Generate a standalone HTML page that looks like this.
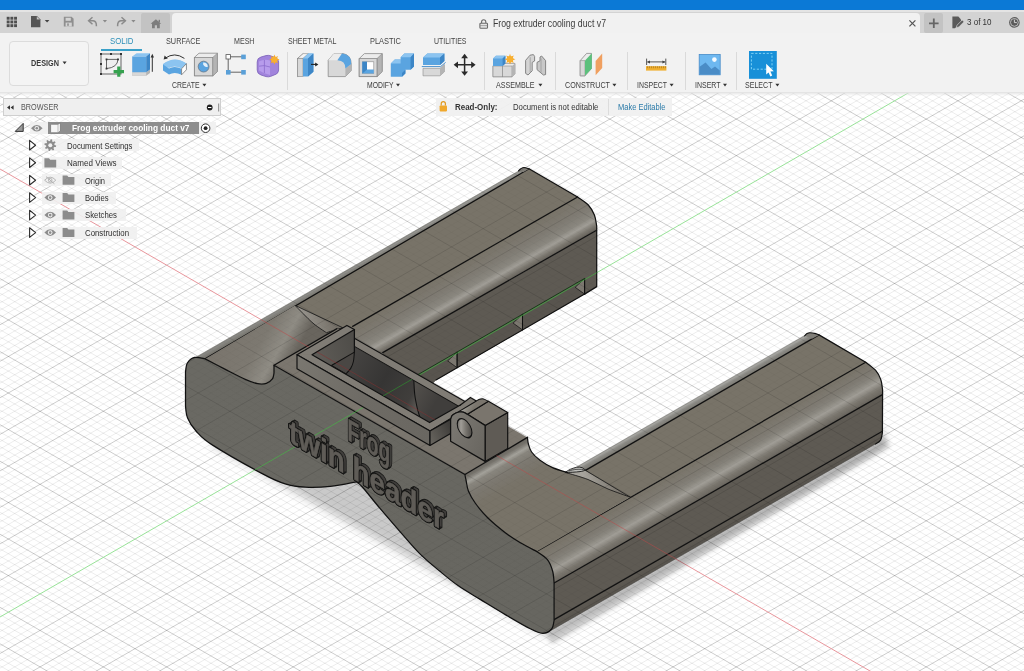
<!DOCTYPE html>
<html><head><meta charset="utf-8"><title>Fusion</title>
<style>
*{box-sizing:border-box;margin:0;padding:0}
html,body{width:1024px;height:671px;overflow:hidden;background:#fff;font-family:"Liberation Sans",sans-serif;}
#cv{position:absolute;left:0;top:0;width:1024px;height:671px}

.t{position:absolute;white-space:nowrap;line-height:1.2;transform-origin:0 50%}
.abs{position:absolute}
#bluebar{position:absolute;left:0;top:0;width:1024px;height:10px;background:#0b79d6}
#tabbar{position:absolute;left:0;top:10px;width:1024px;height:23px;background:#d3d3d3}
#tabgap{position:absolute;left:0;top:10px;width:1024px;height:2px;background:#e4e4e4}
#hometab{position:absolute;left:141px;top:13px;width:29px;height:20px;background:#c3c3c3;border-radius:2px 2px 0 0}
#doctab{position:absolute;left:172px;top:13px;width:748px;height:20px;background:#f1f1f1;border-radius:4px 4px 0 0}
#plusbtn{position:absolute;left:924px;top:13px;width:19px;height:20px;background:#c3c3c3;border-radius:2px}
#toolbar{position:absolute;left:0;top:33px;width:1024px;height:60px;background:#f2f2f2;}
#tbshadow{position:absolute;left:0;top:92px;width:1024px;height:4px;background:linear-gradient(#e2e2e2,rgba(235,235,235,0.0))}
#design{position:absolute;left:8.5px;top:41px;width:80.5px;height:45px;border:1px solid #dcdcdc;border-radius:4px;background:#f4f4f4}
.sep{position:absolute;top:52px;width:1px;height:38px;background:#dadada}
#robar{position:absolute;left:436px;top:98px;width:236px;height:18px;background:rgba(240,240,240,0.93)}
#brhead{position:absolute;left:3px;top:98px;width:218px;height:18px;background:#efefef;border:1px solid #cfcfcf}
.lbl{position:absolute;height:12px;background:rgba(240,240,240,0.9);}

</style></head><body>
<svg id="cv" width="1024" height="671" viewBox="0 0 1024 671">
<rect width="1024" height="671" fill="#fff"/>
<path d="M-5.0 86.7L6.5 80.0M-5.0 94.0L19.2 80.0M-5.0 101.3L31.9 80.0M-5.0 670.1L5.2 676.0M-5.0 115.9L57.2 80.0M-5.0 662.8L17.8 676.0M-5.0 123.2L69.8 80.0M-5.0 655.5L30.5 676.0M-5.0 130.5L82.5 80.0M-5.0 648.2L43.2 676.0M-5.0 137.8L95.2 80.0M-5.0 633.6L68.5 676.0M-5.0 152.4L120.5 80.0M-5.0 626.3L81.1 676.0M-5.0 159.7L133.1 80.0M-5.0 619.0L93.8 676.0M-5.0 167.0L145.8 80.0M-5.0 611.7L106.5 676.0M-5.0 174.3L158.5 80.0M-5.0 597.1L131.8 676.0M-5.0 188.9L183.8 80.0M-5.0 589.8L144.4 676.0M-5.0 196.2L196.4 80.0M-5.0 582.5L157.1 676.0M-5.0 203.5L209.1 80.0M-5.0 575.2L169.8 676.0M-5.0 210.8L221.8 80.0M-5.0 560.6L195.1 676.0M-5.0 225.4L247.1 80.0M-5.0 553.3L207.7 676.0M-5.0 232.7L259.7 80.0M-5.0 546.0L220.4 676.0M-5.0 240.0L272.4 80.0M-5.0 538.7L233.1 676.0M-5.0 247.3L285.1 80.0M-5.0 524.0L258.4 676.0M-5.0 262.0L310.4 80.0M-5.0 516.7L271.0 676.0M-5.0 269.3L323.0 80.0M-5.0 509.4L283.7 676.0M-5.0 276.6L335.7 80.0M-5.0 502.1L296.4 676.0M-5.0 283.9L348.4 80.0M-5.0 487.5L321.7 676.0M-5.0 298.5L373.7 80.0M-5.0 480.2L334.3 676.0M-5.0 305.8L386.3 80.0M-5.0 472.9L347.0 676.0M-5.0 313.1L399.0 80.0M-5.0 465.6L359.7 676.0M-5.0 320.4L411.7 80.0M-5.0 451.0L385.0 676.0M-5.0 335.0L437.0 80.0M-5.0 443.7L397.6 676.0M-5.0 342.3L449.6 80.0M-5.0 436.4L410.3 676.0M-5.0 349.6L462.3 80.0M-5.0 429.1L423.0 676.0M-5.0 356.9L475.0 80.0M-5.0 414.5L448.3 676.0M-5.0 371.5L500.3 80.0M-5.0 407.2L460.9 676.0M-5.0 378.8L512.9 80.0M-5.0 399.9L473.6 676.0M-5.0 386.1L525.6 80.0M-5.0 392.6L486.3 676.0M-5.0 393.4L538.3 80.0M-5.0 378.0L511.6 676.0M-5.0 408.0L563.6 80.0M-5.0 370.7L524.2 676.0M-5.0 415.3L576.2 80.0M-5.0 363.4L536.9 676.0M-5.0 422.6L588.9 80.0M-5.0 356.1L549.6 676.0M-5.0 429.9L601.6 80.0M-5.0 341.4L574.9 676.0M-5.0 444.6L626.9 80.0M-5.0 334.1L587.5 676.0M-5.0 451.9L639.5 80.0M-5.0 326.8L600.2 676.0M-5.0 459.2L652.2 80.0M-5.0 319.5L612.9 676.0M-5.0 466.5L664.9 80.0M-5.0 304.9L638.2 676.0M-5.0 481.1L690.2 80.0M-5.0 297.6L650.8 676.0M-5.0 488.4L702.8 80.0M-5.0 290.3L663.5 676.0M-5.0 495.7L715.5 80.0M-5.0 283.0L676.2 676.0M-5.0 503.0L728.2 80.0M-5.0 268.4L701.5 676.0M-5.0 517.6L753.5 80.0M-5.0 261.1L714.1 676.0M-5.0 524.9L766.1 80.0M-5.0 253.8L726.8 676.0M-5.0 532.2L778.8 80.0M-5.0 246.5L739.5 676.0M-5.0 539.5L791.5 80.0M-5.0 231.9L764.8 676.0M-5.0 554.1L816.8 80.0M-5.0 224.6L777.4 676.0M-5.0 561.4L829.4 80.0M-5.0 217.3L790.1 676.0M-5.0 568.7L842.1 80.0M-5.0 210.0L802.8 676.0M-5.0 576.0L854.8 80.0M-5.0 195.4L828.1 676.0M-5.0 590.6L880.1 80.0M-5.0 188.1L840.7 676.0M-5.0 597.9L892.7 80.0M-5.0 180.8L853.4 676.0M-5.0 605.2L905.4 80.0M-5.0 173.5L866.1 676.0M-5.0 612.5L918.1 80.0M-5.0 158.8L891.4 676.0M-5.0 627.2L943.4 80.0M-5.0 151.5L904.0 676.0M-5.0 634.5L956.0 80.0M-5.0 144.2L916.7 676.0M-5.0 641.8L968.7 80.0M-5.0 136.9L929.4 676.0M-5.0 649.1L981.4 80.0M-5.0 122.3L954.7 676.0M-5.0 663.7L1006.7 80.0M-5.0 115.0L967.3 676.0M-5.0 671.0L1019.3 80.0M-5.0 107.7L980.0 676.0M-1.0 676.0L1029.0 81.7M-5.0 100.4L992.7 676.0M11.6 676.0L1029.0 89.0M-5.0 85.8L1018.0 676.0M36.9 676.0L1029.0 103.6M-2.4 80.0L1029.0 675.1M49.6 676.0L1029.0 110.9M10.3 80.0L1029.0 667.7M62.3 676.0L1029.0 118.3M22.9 80.0L1029.0 660.4M74.9 676.0L1029.0 125.6M48.2 80.0L1029.0 645.8M100.2 676.0L1029.0 140.2M60.9 80.0L1029.0 638.5M112.9 676.0L1029.0 147.5M73.6 80.0L1029.0 631.2M125.6 676.0L1029.0 154.8M86.2 80.0L1029.0 623.9M138.2 676.0L1029.0 162.1M111.5 80.0L1029.0 609.3M163.5 676.0L1029.0 176.7M124.2 80.0L1029.0 602.0M176.2 676.0L1029.0 184.0M136.9 80.0L1029.0 594.7M188.9 676.0L1029.0 191.3M149.5 80.0L1029.0 587.4M201.5 676.0L1029.0 198.6M174.8 80.0L1029.0 572.8M226.8 676.0L1029.0 213.2M187.5 80.0L1029.0 565.5M239.5 676.0L1029.0 220.5M200.2 80.0L1029.0 558.2M252.2 676.0L1029.0 227.8M212.8 80.0L1029.0 550.9M264.8 676.0L1029.0 235.1M238.1 80.0L1029.0 536.3M290.1 676.0L1029.0 249.7M250.8 80.0L1029.0 529.0M302.8 676.0L1029.0 257.0M263.5 80.0L1029.0 521.7M315.5 676.0L1029.0 264.3M276.1 80.0L1029.0 514.4M328.1 676.0L1029.0 271.6M301.4 80.0L1029.0 499.8M353.4 676.0L1029.0 286.2M314.1 80.0L1029.0 492.5M366.1 676.0L1029.0 293.5M326.8 80.0L1029.0 485.1M378.8 676.0L1029.0 300.9M339.4 80.0L1029.0 477.8M391.4 676.0L1029.0 308.2M364.7 80.0L1029.0 463.2M416.7 676.0L1029.0 322.8M377.4 80.0L1029.0 455.9M429.4 676.0L1029.0 330.1M390.1 80.0L1029.0 448.6M442.1 676.0L1029.0 337.4M402.7 80.0L1029.0 441.3M454.7 676.0L1029.0 344.7M428.0 80.0L1029.0 426.7M480.0 676.0L1029.0 359.3M440.7 80.0L1029.0 419.4M492.7 676.0L1029.0 366.6M453.4 80.0L1029.0 412.1M505.4 676.0L1029.0 373.9M466.0 80.0L1029.0 404.8M518.0 676.0L1029.0 381.2M491.3 80.0L1029.0 390.2M543.3 676.0L1029.0 395.8M504.0 80.0L1029.0 382.9M556.0 676.0L1029.0 403.1M516.7 80.0L1029.0 375.6M568.7 676.0L1029.0 410.4M529.3 80.0L1029.0 368.3M581.3 676.0L1029.0 417.7M554.6 80.0L1029.0 353.7M606.6 676.0L1029.0 432.3M567.3 80.0L1029.0 346.4M619.3 676.0L1029.0 439.6M580.0 80.0L1029.0 339.1M632.0 676.0L1029.0 446.9M592.6 80.0L1029.0 331.8M644.6 676.0L1029.0 454.2M617.9 80.0L1029.0 317.2M669.9 676.0L1029.0 468.8M630.6 80.0L1029.0 309.9M682.6 676.0L1029.0 476.1M643.3 80.0L1029.0 302.5M695.3 676.0L1029.0 483.5M655.9 80.0L1029.0 295.2M707.9 676.0L1029.0 490.8M681.2 80.0L1029.0 280.6M733.2 676.0L1029.0 505.4M693.9 80.0L1029.0 273.3M745.9 676.0L1029.0 512.7M706.6 80.0L1029.0 266.0M758.6 676.0L1029.0 520.0M719.2 80.0L1029.0 258.7M771.2 676.0L1029.0 527.3M744.5 80.0L1029.0 244.1M796.5 676.0L1029.0 541.9M757.2 80.0L1029.0 236.8M809.2 676.0L1029.0 549.2M769.9 80.0L1029.0 229.5M821.9 676.0L1029.0 556.5M782.5 80.0L1029.0 222.2M834.5 676.0L1029.0 563.8M807.8 80.0L1029.0 207.6M859.8 676.0L1029.0 578.4M820.5 80.0L1029.0 200.3M872.5 676.0L1029.0 585.7M833.2 80.0L1029.0 193.0M885.2 676.0L1029.0 593.0M845.8 80.0L1029.0 185.7M897.8 676.0L1029.0 600.3M871.1 80.0L1029.0 171.1M923.1 676.0L1029.0 614.9M883.8 80.0L1029.0 163.8M935.8 676.0L1029.0 622.2M896.5 80.0L1029.0 156.5M948.5 676.0L1029.0 629.5M909.1 80.0L1029.0 149.2M961.1 676.0L1029.0 636.8M934.4 80.0L1029.0 134.6M986.4 676.0L1029.0 651.4M947.1 80.0L1029.0 127.3M999.1 676.0L1029.0 658.7M959.8 80.0L1029.0 119.9M1011.8 676.0L1029.0 666.1M972.4 80.0L1029.0 112.6M1024.4 676.0L1029.0 673.4M997.7 80.0L1029.0 98.0M1010.4 80.0L1029.0 90.7M1023.1 80.0L1029.0 83.4" stroke="#000" stroke-opacity="0.075" stroke-width="1" fill="none"/>
<path d="M-5.0 108.6L44.5 80.0M-5.0 640.9L55.8 676.0M-5.0 145.1L107.8 80.0M-5.0 604.4L119.1 676.0M-5.0 181.6L171.1 80.0M-5.0 567.9L182.4 676.0M-5.0 218.1L234.4 80.0M-5.0 531.3L245.7 676.0M-5.0 254.7L297.7 80.0M-5.0 494.8L309.0 676.0M-5.0 291.2L361.0 80.0M-5.0 458.3L372.3 676.0M-5.0 327.7L424.3 80.0M-5.0 421.8L435.6 676.0M-5.0 364.2L487.6 80.0M-5.0 385.3L498.9 676.0M-5.0 400.7L550.9 80.0M-5.0 348.7L562.2 676.0M-5.0 437.3L614.2 80.0M-5.0 312.2L625.5 676.0M-5.0 473.8L677.5 80.0M-5.0 275.7L688.8 676.0M-5.0 510.3L740.8 80.0M-5.0 239.2L752.1 676.0M-5.0 546.8L804.1 80.0M-5.0 202.7L815.4 676.0M-5.0 583.3L867.4 80.0M-5.0 129.6L942.0 676.0M-5.0 656.4L994.0 80.0M-5.0 93.1L1005.3 676.0M24.3 676.0L1029.0 96.3M35.6 80.0L1029.0 653.1M87.6 676.0L1029.0 132.9M98.9 80.0L1029.0 616.6M150.9 676.0L1029.0 169.4M162.2 80.0L1029.0 580.1M214.2 676.0L1029.0 205.9M225.5 80.0L1029.0 543.6M277.5 676.0L1029.0 242.4M288.8 80.0L1029.0 507.1M340.8 676.0L1029.0 278.9M352.1 80.0L1029.0 470.5M404.1 676.0L1029.0 315.5M415.4 80.0L1029.0 434.0M467.4 676.0L1029.0 352.0M478.7 80.0L1029.0 397.5M530.7 676.0L1029.0 388.5M542.0 80.0L1029.0 361.0M594.0 676.0L1029.0 425.0M605.3 80.0L1029.0 324.5M657.3 676.0L1029.0 461.5M668.6 80.0L1029.0 287.9M720.6 676.0L1029.0 498.1M731.9 80.0L1029.0 251.4M783.9 676.0L1029.0 534.6M795.2 80.0L1029.0 214.9M847.2 676.0L1029.0 571.1M858.5 80.0L1029.0 178.4M910.5 676.0L1029.0 607.6M921.8 80.0L1029.0 141.9M973.8 676.0L1029.0 644.1M985.1 80.0L1029.0 105.3" stroke="#000" stroke-opacity="0.2" stroke-width="1" fill="none"/>
<path d="M-5.0 166.1L878.7 676.0" stroke="#e8969c" stroke-width="1" fill="none"/>
<path d="M-5.0 619.9L930.7 80.0" stroke="#98e298" stroke-width="1" fill="none"/>
<defs><linearGradient id="gLAo" gradientUnits="userSpaceOnUse" x1="400.0" y1="239.3" x2="403.2" y2="244.9"><stop offset="0" stop-color="#a6a6a2"/><stop offset="0.4" stop-color="#878681"/><stop offset="1" stop-color="#74726b"/></linearGradient><linearGradient id="gLAf" gradientUnits="userSpaceOnUse" x1="500.0" y1="241.6" x2="519.0" y2="274.5"><stop offset="0" stop-color="#787368"/><stop offset="0.4" stop-color="#7f7b73"/><stop offset="0.62" stop-color="#89867e"/><stop offset="0.76" stop-color="#a09d96"/><stop offset="0.9" stop-color="#7a766e"/><stop offset="1" stop-color="#66625b"/></linearGradient><linearGradient id="gRAo" gradientUnits="userSpaceOnUse" x1="700.0" y1="396.1" x2="703.8" y2="402.7"><stop offset="0" stop-color="#b0b0ac"/><stop offset="0.4" stop-color="#8b8a85"/><stop offset="1" stop-color="#76746d"/></linearGradient><linearGradient id="gRAf" gradientUnits="userSpaceOnUse" x1="700.0" y1="457.0" x2="719.0" y2="489.9"><stop offset="0" stop-color="#787368"/><stop offset="0.35" stop-color="#7f7b73"/><stop offset="0.5" stop-color="#8a877f"/><stop offset="0.64" stop-color="#a09d96"/><stop offset="0.82" stop-color="#7a766e"/><stop offset="1" stop-color="#66625b"/></linearGradient><linearGradient id="gRAb" gradientUnits="userSpaceOnUse" x1="700.0" y1="536.0" x2="708.0" y2="549.9"><stop offset="0" stop-color="#5e5a53"/><stop offset="0.5" stop-color="#57534d"/><stop offset="1" stop-color="#504d48"/></linearGradient><linearGradient id="gScL" gradientUnits="userSpaceOnUse" x1="215.0" y1="352.0" x2="275.0" y2="387.0"><stop offset="0" stop-color="#7a756d"/><stop offset="0.5" stop-color="#7d7971"/><stop offset="0.78" stop-color="#8f8c84"/><stop offset="1" stop-color="#69655e"/></linearGradient><linearGradient id="gWL" gradientUnits="userSpaceOnUse" x1="300.0" y1="330.0" x2="330.0" y2="318.0"><stop offset="0" stop-color="#a09d96"/><stop offset="1" stop-color="#77726a"/></linearGradient><linearGradient id="gScR" gradientUnits="userSpaceOnUse" x1="496.0" y1="456.0" x2="513.0" y2="485.4"><stop offset="0" stop-color="#6b6862"/><stop offset="0.1" stop-color="#76736c"/><stop offset="0.24" stop-color="#a3a19a"/><stop offset="0.36" stop-color="#88857d"/><stop offset="0.6" stop-color="#7c7870"/><stop offset="1" stop-color="#787368"/></linearGradient><linearGradient id="gWR" gradientUnits="userSpaceOnUse" x1="590.0" y1="490.0" x2="615.0" y2="478.0"><stop offset="0" stop-color="#a8a59e"/><stop offset="1" stop-color="#77726a"/></linearGradient><linearGradient id="gFr" gradientUnits="userSpaceOnUse" x1="190.0" y1="400.0" x2="550.0" y2="600.0"><stop offset="0" stop-color="#6a6963"/><stop offset="1" stop-color="#676660"/></linearGradient><linearGradient id="gBk" gradientUnits="userSpaceOnUse" x1="350.0" y1="350.0" x2="460.0" y2="412.0"><stop offset="0" stop-color="#474543"/><stop offset="0.35" stop-color="#363534"/><stop offset="0.6" stop-color="#403e3c"/><stop offset="0.68" stop-color="#5a5753"/><stop offset="1" stop-color="#4a4845"/></linearGradient><linearGradient id="gBk2" gradientUnits="userSpaceOnUse" x1="414.0" y1="380.0" x2="440.0" y2="395.0"><stop offset="0" stop-color="#55524e"/><stop offset="1" stop-color="#403e3c"/></linearGradient><linearGradient id="gIL" gradientUnits="userSpaceOnUse" x1="312.0" y1="355.0" x2="354.0" y2="345.0"><stop offset="0" stop-color="#605d58"/><stop offset="1" stop-color="#4f4d49"/></linearGradient><linearGradient id="gBf" gradientUnits="userSpaceOnUse" x1="297.0" y1="360.0" x2="430.0" y2="436.0"><stop offset="0" stop-color="#7a7770"/><stop offset="0.5" stop-color="#6e6b65"/><stop offset="1" stop-color="#6a6761"/></linearGradient><linearGradient id="gBr" gradientUnits="userSpaceOnUse" x1="430.0" y1="438.0" x2="451.0" y2="427.0"><stop offset="0" stop-color="#65625c"/><stop offset="1" stop-color="#3f3d3a"/></linearGradient><linearGradient id="gLc" gradientUnits="userSpaceOnUse" x1="456.0" y1="411.0" x2="468.0" y2="418.0"><stop offset="0" stop-color="#6f6c66"/><stop offset="0.3" stop-color="#aaa7a1"/><stop offset="0.6" stop-color="#8d8a82"/><stop offset="1" stop-color="#7a756d"/></linearGradient><linearGradient id="gLf" gradientUnits="userSpaceOnUse" x1="450.0" y1="430.0" x2="485.0" y2="445.0"><stop offset="0" stop-color="#7a7771"/><stop offset="1" stop-color="#6a6761"/></linearGradient><linearGradient id="gHo" gradientUnits="userSpaceOnUse" x1="-8.5" y1="0.0" x2="8.5" y2="0.0"><stop offset="0" stop-color="#6a6762"/><stop offset="0.25" stop-color="#a09d97"/><stop offset="0.55" stop-color="#7c7973"/><stop offset="1" stop-color="#4e4b47"/></linearGradient><clipPath id="mclip"><path d="M195.6 357.4L520.4 170.0L525.3 167.4L529.0 168.8L205.1 358.9Z"/><path d="M529.0 168.8L577.6 197.0L352.7 326.4L356.0 332.0L348.0 334.0L342.7 327.7L295.1 305.4Z"/><path d="M352.7 326.4L577.6 197.0C579.4 198.4 585.7 202.2 588.5 205.2C591.3 208.2 593.0 211.6 594.4 215.1C595.8 218.6 596.3 224.2 596.7 226.0L596.6 230.2L382.7 352.6L370.0 360.0L350.0 345.0Z"/><path d="M382.7 352.6L596.6 230.2L596.7 286.6L584.6 294.1L436.0 379.9L430.0 386.0L380.0 360.0Z"/><path d="M584.6 278.4L584.6 294.1L436.0 379.9L430.0 386.0L418.0 374.6Z"/><path d="M584.6 278.4L584.6 294.1L575.2 287.3Z"/><path d="M522.5 314.2L522.5 329.9L513.1 323.1Z"/><path d="M457.1 352.0L457.1 367.7L447.7 360.9Z"/><path d="M518.0 171.4C518.4 171.0 519.6 169.7 520.6 169.0C521.6 168.3 522.6 167.5 524.0 167.5C525.4 167.5 528.2 168.6 529.0 168.8L523.5 172.0Z"/><path d="M576.6 467.3L804.7 335.8L810.0 332.8L819.0 334.9L585.5 470.4Z"/><path d="M585.5 470.4L819.0 334.9L865.7 362.2L630.3 497.2Z"/><path d="M536.6 551.4L865.7 362.2C867.3 363.5 873.0 367.3 875.5 370.2C878.0 373.1 879.6 376.3 880.8 379.6C882.0 382.9 882.3 388.3 882.6 390.0L882.4 394.6L554.1 583.0Z"/><path d="M554.1 583.0L882.4 394.6L882.4 431.2L554.1 619.6Z"/><path d="M554.1 619.6L882.4 431.2L882.4 432.7C882.1 433.9 881.8 438.3 880.6 440.2C879.4 442.1 876.3 443.4 875.4 444.0L547.0 632.7L554.1 620.3Z"/><path d="M804.7 335.8C805.1 335.4 806.1 334.1 807.0 333.6C807.9 333.1 808.6 332.8 810.0 332.8C811.4 332.8 814.1 333.2 815.6 333.6C817.1 334.0 818.4 334.7 819.0 334.9L812.0 338.8Z"/><path d="M205.1 358.9C208.2 360.5 217.2 365.2 223.9 368.6C230.6 372.0 239.6 376.9 245.2 379.4C250.8 381.9 254.2 383.0 257.7 383.7C261.2 384.4 263.9 384.2 266.4 383.4C268.8 382.6 271.1 380.6 272.4 378.9C273.7 377.2 273.7 374.0 274.0 373.0L274.0 365.2L296.5 355.6L330.0 352.0L348.0 330.0L295.1 305.4Z"/><path d="M295.1 305.4L342.7 327.7L326.4 332.7C324.3 331.2 317.9 327.2 314.0 324.0C310.1 320.8 306.1 316.6 303.0 313.5C299.9 310.4 296.4 306.8 295.1 305.4Z"/><path d="M274.0 365.2L464.9 474.5L527.4 437.4L336.5 328.1Z"/><path d="M464.9 474.5C465.1 475.6 465.6 478.2 466.2 481.0C466.8 483.8 466.9 487.3 468.4 491.0C469.9 494.7 472.0 498.5 475.2 503.0C478.4 507.5 482.7 512.8 487.7 517.8C492.7 522.8 499.9 528.6 505.3 532.8C510.7 537.0 515.1 539.7 520.3 542.8C525.5 545.9 533.9 550.0 536.6 551.4L630.3 497.2L585.5 470.4L567.6 472.6C565.1 471.8 557.2 469.7 552.6 467.6C548.0 465.5 543.5 462.8 540.0 460.2C536.5 457.6 533.5 454.7 531.6 452.0C529.7 449.3 529.1 446.4 528.4 444.0C527.7 441.6 527.6 438.5 527.4 437.4Z"/><path d="M585.5 470.4L630.3 497.2C626.6 495.8 615.0 491.9 608.0 489.0C601.0 486.1 595.0 482.2 588.0 479.5C581.0 476.8 569.7 473.8 566.0 472.6Z"/><path d="M565.0 472.4C565.9 471.9 568.6 470.0 570.5 469.2C572.4 468.4 574.7 467.6 576.6 467.3C578.5 467.0 580.5 467.1 582.0 467.6C583.5 468.1 584.9 469.8 585.5 470.2C584.6 470.4 582.2 471.3 580.0 471.6C577.8 471.9 575.0 472.1 572.5 472.2C570.0 472.3 566.2 472.4 565.0 472.4Z"/><path d="M205.1 358.9C208.2 360.5 217.2 365.2 223.9 368.6C230.6 372.0 239.6 376.9 245.2 379.4C250.8 381.9 254.2 383.0 257.7 383.7C261.2 384.4 263.9 384.2 266.4 383.4C268.8 382.6 271.1 380.6 272.4 378.9C273.7 377.2 273.7 374.0 274.0 373.0L274.0 365.2L464.9 474.5C465.1 475.6 465.6 478.2 466.2 481.0C466.8 483.8 466.9 487.3 468.4 491.0C469.9 494.7 472.0 498.5 475.2 503.0C478.4 507.5 482.7 512.8 487.7 517.8C492.7 522.8 499.9 528.6 505.3 532.8C510.7 537.0 515.1 539.7 520.3 542.8C525.5 545.9 533.9 550.0 536.6 551.4C538.4 552.8 544.7 556.3 547.4 559.6C550.1 562.9 551.5 567.1 552.6 571.0C553.7 574.9 553.9 581.0 554.1 583.0L554.1 620.3C553.7 621.8 553.5 626.8 551.6 629.0C549.7 631.2 546.3 633.3 542.8 633.3C539.2 633.3 536.5 631.9 530.3 628.8C524.0 625.7 513.6 619.5 505.3 614.6C497.0 609.7 488.1 604.2 480.2 599.4C472.3 594.6 464.8 590.4 458.0 585.6C451.2 580.8 445.7 576.1 439.3 570.8C432.9 565.5 426.2 560.1 419.7 553.6C413.1 547.1 406.6 539.1 400.0 531.6C393.4 524.1 386.3 515.8 380.0 508.4C373.7 501.0 366.3 491.4 362.4 487.0C358.5 482.6 357.6 482.7 356.6 481.8C352.2 482.6 338.9 485.5 330.3 486.4C321.8 487.3 312.8 487.6 305.3 487.2C297.8 486.8 292.3 486.1 285.2 483.9C278.1 481.7 274.8 480.4 262.7 473.9C250.6 467.4 223.7 452.2 212.6 445.1C201.5 438.0 200.2 435.5 196.0 431.0C191.8 426.5 189.3 422.2 187.6 418.0C185.8 413.8 185.8 408.0 185.5 406.0L185.5 372.0C185.8 370.5 185.9 365.4 187.4 363.0C188.9 360.6 191.7 358.1 194.6 357.4C197.5 356.7 203.3 358.6 205.1 358.9Z"/><path d="M354.4 346.4L459.4 406.6L429.6 422.6L345.9 373.9Z"/><path d="M413.8 380.3C414.0 382.8 414.2 390.4 414.8 395.0C415.4 399.6 416.4 404.3 417.2 408.0C418.0 411.7 419.4 415.7 419.8 417.2L429.6 422.6L459.4 406.6Z"/><path d="M354.4 338.2L468.0 403.2L459.4 406.6L354.4 346.4Z"/><path d="M312.0 354.7L354.4 329.6L354.4 352.1L331.4 365.5Z"/><path d="M331.4 365.5L354.4 352.1C354.2 353.7 354.0 358.8 353.4 361.5C352.8 364.2 351.9 366.5 350.6 368.6C349.4 370.7 346.7 373.0 345.9 373.9Z"/><path d="M297.0 354.7L346.9 325.4L354.4 329.6L312.0 354.7Z"/><path d="M297.0 354.7L430.0 431.0L429.6 422.6L312.0 354.7Z"/><path d="M430.0 431.0L478.0 402.0L470.4 397.6L460.4 405.0L429.6 422.6Z"/><path d="M297.0 354.7L430.0 431.0L430.0 445.4L297.0 368.7Z"/><path d="M430.0 431.0L450.6 419.2L450.6 433.6L430.0 445.4Z"/><path d="M485.1 425.4L507.7 412.6L507.7 448.5L485.1 461.4Z"/><path d="M467.4 414.2L488.4 401.3L507.7 412.6L485.1 425.4Z"/><path d="M452.0 415.6L476.4 401.0C476.9 400.7 478.4 399.5 479.6 399.2C480.8 398.9 482.1 398.6 483.6 399.0C485.1 399.4 487.6 400.9 488.4 401.3L467.4 414.2C466.7 413.9 464.7 412.6 463.4 412.2C462.1 411.8 460.7 411.8 459.4 412.0C458.1 412.2 456.6 412.6 455.4 413.2C454.2 413.8 452.6 415.2 452.0 415.6Z"/><path d="M450.6 441.3L450.6 419.5C450.8 418.9 451.2 416.7 452.0 415.6C452.8 414.6 454.2 413.8 455.4 413.2C456.6 412.6 458.1 412.2 459.4 412.0C460.7 411.8 462.1 411.8 463.4 412.2C464.7 412.6 466.7 413.9 467.4 414.2L485.1 425.4L485.1 461.4Z"/></clipPath><clipPath id="bclip"><path d="M354.4 346.4L459.4 406.6L429.6 422.6L312.0 354.7L354.4 329.6Z"/></clipPath><filter id="blur" x="-20%" y="-20%" width="140%" height="140%"><feGaussianBlur stdDeviation="4.5"/></filter><filter id="blur2" x="-20%" y="-20%" width="140%" height="140%"><feGaussianBlur stdDeviation="2"/></filter></defs>
<path d="M210 444L546 636L612 600L884 447L884 428L600 560L270 400Z" fill="#000" fill-opacity="0.21" filter="url(#blur)"/><path d="M546 634L876 445L884 436L890 446L552 644Z" fill="#000" fill-opacity="0.2" filter="url(#blur2)"/>
<path d="M195.6 357.4L520.4 170.0L525.3 167.4L529.0 168.8L205.1 358.9Z" fill="url(#gLAo)" stroke="none" stroke-width="1.0" stroke-linejoin="round" />
<path d="M529.0 168.8L577.6 197.0L352.7 326.4L356.0 332.0L348.0 334.0L342.7 327.7L295.1 305.4Z" fill="#787368" stroke="none" stroke-width="1.0" stroke-linejoin="round" />
<path d="M352.7 326.4L577.6 197.0C579.4 198.4 585.7 202.2 588.5 205.2C591.3 208.2 593.0 211.6 594.4 215.1C595.8 218.6 596.3 224.2 596.7 226.0L596.6 230.2L382.7 352.6L370.0 360.0L350.0 345.0Z" fill="url(#gLAf)" stroke="none" stroke-width="1.0" stroke-linejoin="round" />
<path d="M382.7 352.6L596.6 230.2L596.7 286.6L584.6 294.1L436.0 379.9L430.0 386.0L380.0 360.0Z" fill="#5e5a53" stroke="none" stroke-width="1.0" stroke-linejoin="round" />
<path d="M584.6 278.4L584.6 294.1L436.0 379.9L430.0 386.0L418.0 374.6Z" fill="#58544e" stroke="none" stroke-width="1.0" stroke-linejoin="round" />
<path d="M584.6 278.4L584.6 294.1L575.2 287.3Z" fill="#7b776f" stroke="#111" stroke-width="0.7" stroke-linejoin="round" />
<path d="M584.6 278.4L584.6 294.1" fill="none" stroke="#111" stroke-width="1.05" stroke-linecap="round" stroke-linejoin="round" />
<path d="M522.5 314.2L522.5 329.9L513.1 323.1Z" fill="#7b776f" stroke="#111" stroke-width="0.7" stroke-linejoin="round" />
<path d="M522.5 314.2L522.5 329.9" fill="none" stroke="#111" stroke-width="1.05" stroke-linecap="round" stroke-linejoin="round" />
<path d="M457.1 352.0L457.1 367.7L447.7 360.9Z" fill="#7b776f" stroke="#111" stroke-width="0.7" stroke-linejoin="round" />
<path d="M457.1 352.0L457.1 367.7" fill="none" stroke="#111" stroke-width="1.05" stroke-linecap="round" stroke-linejoin="round" />
<path d="M584.6 278.4L418.0 374.6" fill="none" stroke="#1c3a1c" stroke-width="1.0" stroke-linecap="round" stroke-linejoin="round" />
<path d="M584.6 294.1L436.0 379.9" fill="none" stroke="#111" stroke-width="1.2" stroke-linecap="round" stroke-linejoin="round" />
<path d="M205.1 358.9L529.0 168.8L577.6 197.0C579.4 198.4 585.7 202.2 588.5 205.2C591.3 208.2 593.0 211.6 594.4 215.1C595.8 218.6 596.3 224.2 596.7 226.0L596.7 286.6L584.6 294.1" fill="none" stroke="#111" stroke-width="1.25" stroke-linecap="round" stroke-linejoin="round" />
<path d="M577.6 197.0L352.7 326.4" fill="none" stroke="#111" stroke-width="1.25" stroke-linecap="round" stroke-linejoin="round" />
<path d="M596.6 230.2L382.7 352.6" fill="none" stroke="#111" stroke-width="1.25" stroke-linecap="round" stroke-linejoin="round" />
<path d="M195.6 357.4L520.4 170.0" fill="none" stroke="#77766f" stroke-width="0.6" stroke-linecap="round" stroke-linejoin="round" />
<path d="M518.0 171.4C518.4 171.0 519.6 169.7 520.6 169.0C521.6 168.3 522.6 167.5 524.0 167.5C525.4 167.5 528.2 168.6 529.0 168.8L523.5 172.0Z" fill="#807e78" stroke="none" stroke-width="1.0" stroke-linejoin="round" />
<path d="M518.6 170.8C519.0 170.5 519.9 169.4 520.8 168.8C521.7 168.2 522.6 167.5 524.0 167.5C525.4 167.5 528.2 168.6 529.0 168.8" fill="none" stroke="#111" stroke-width="1.1" stroke-linecap="round" stroke-linejoin="round" />
<path d="M576.6 467.3L804.7 335.8L810.0 332.8L819.0 334.9L585.5 470.4Z" fill="url(#gRAo)" stroke="none" stroke-width="1.0" stroke-linejoin="round" />
<path d="M585.5 470.4L819.0 334.9L865.7 362.2L630.3 497.2Z" fill="#787368" stroke="none" stroke-width="1.0" stroke-linejoin="round" />
<path d="M536.6 551.4L865.7 362.2C867.3 363.5 873.0 367.3 875.5 370.2C878.0 373.1 879.6 376.3 880.8 379.6C882.0 382.9 882.3 388.3 882.6 390.0L882.4 394.6L554.1 583.0Z" fill="url(#gRAf)" stroke="none" stroke-width="1.0" stroke-linejoin="round" />
<path d="M554.1 583.0L882.4 394.6L882.4 431.2L554.1 619.6Z" fill="#5e5a53" stroke="none" stroke-width="1.0" stroke-linejoin="round" />
<path d="M554.1 619.6L882.4 431.2L882.4 432.7C882.1 433.9 881.8 438.3 880.6 440.2C879.4 442.1 876.3 443.4 875.4 444.0L547.0 632.7L554.1 620.3Z" fill="url(#gRAb)" stroke="none" stroke-width="1.0" stroke-linejoin="round" />
<path d="M585.5 470.4L819.0 334.9L865.7 362.2C867.3 363.5 873.0 367.3 875.5 370.2C878.0 373.1 879.6 376.3 880.8 379.6C882.0 382.9 882.3 388.3 882.6 390.0L882.4 432.7C882.1 433.9 881.8 438.3 880.6 440.2C879.4 442.1 876.3 443.4 875.4 444.0" fill="none" stroke="#111" stroke-width="1.25" stroke-linecap="round" stroke-linejoin="round" />
<path d="M536.6 551.4L865.7 362.2" fill="none" stroke="#111" stroke-width="1.25" stroke-linecap="round" stroke-linejoin="round" />
<path d="M554.1 583.0L882.4 394.6" fill="none" stroke="#111" stroke-width="1.25" stroke-linecap="round" stroke-linejoin="round" />
<path d="M554.1 619.6L882.4 431.2" fill="none" stroke="#111" stroke-width="1.25" stroke-linecap="round" stroke-linejoin="round" />
<path d="M576.6 467.3L804.7 335.8" fill="none" stroke="#77766f" stroke-width="0.6" stroke-linecap="round" stroke-linejoin="round" />
<path d="M804.7 335.8C805.1 335.4 806.1 334.1 807.0 333.6C807.9 333.1 808.6 332.8 810.0 332.8C811.4 332.8 814.1 333.2 815.6 333.6C817.1 334.0 818.4 334.7 819.0 334.9L812.0 338.8Z" fill="#807e78" stroke="none" stroke-width="1.0" stroke-linejoin="round" />
<path d="M804.7 335.8C805.1 335.4 806.1 334.1 807.0 333.6C807.9 333.1 808.6 332.8 810.0 332.8C811.4 332.8 814.1 333.2 815.6 333.6C817.1 334.0 818.4 334.7 819.0 334.9" fill="none" stroke="#111" stroke-width="1.1" stroke-linecap="round" stroke-linejoin="round" />
<path d="M547.0 632.7L875.4 444.0" fill="none" stroke="#4a4844" stroke-width="0.6" stroke-linecap="round" stroke-linejoin="round" />
<path d="M205.1 358.9C208.2 360.5 217.2 365.2 223.9 368.6C230.6 372.0 239.6 376.9 245.2 379.4C250.8 381.9 254.2 383.0 257.7 383.7C261.2 384.4 263.9 384.2 266.4 383.4C268.8 382.6 271.1 380.6 272.4 378.9C273.7 377.2 273.7 374.0 274.0 373.0L274.0 365.2L296.5 355.6L330.0 352.0L348.0 330.0L295.1 305.4Z" fill="url(#gScL)" stroke="none" stroke-width="1.0" stroke-linejoin="round" />
<path d="M295.1 305.4L342.7 327.7L326.4 332.7C324.3 331.2 317.9 327.2 314.0 324.0C310.1 320.8 306.1 316.6 303.0 313.5C299.9 310.4 296.4 306.8 295.1 305.4Z" fill="url(#gWL)" stroke="#111" stroke-width="0.8" stroke-linejoin="round" />
<path d="M274.0 365.2L464.9 474.5L527.4 437.4L336.5 328.1Z" fill="#7b766e" stroke="none" stroke-width="1.0" stroke-linejoin="round" />
<path d="M464.9 474.5C465.1 475.6 465.6 478.2 466.2 481.0C466.8 483.8 466.9 487.3 468.4 491.0C469.9 494.7 472.0 498.5 475.2 503.0C478.4 507.5 482.7 512.8 487.7 517.8C492.7 522.8 499.9 528.6 505.3 532.8C510.7 537.0 515.1 539.7 520.3 542.8C525.5 545.9 533.9 550.0 536.6 551.4L630.3 497.2L585.5 470.4L567.6 472.6C565.1 471.8 557.2 469.7 552.6 467.6C548.0 465.5 543.5 462.8 540.0 460.2C536.5 457.6 533.5 454.7 531.6 452.0C529.7 449.3 529.1 446.4 528.4 444.0C527.7 441.6 527.6 438.5 527.4 437.4Z" fill="url(#gScR)" stroke="none" stroke-width="1.0" stroke-linejoin="round" />
<path d="M585.5 470.4L630.3 497.2C626.6 495.8 615.0 491.9 608.0 489.0C601.0 486.1 595.0 482.2 588.0 479.5C581.0 476.8 569.7 473.8 566.0 472.6Z" fill="url(#gWR)" stroke="#111" stroke-width="0.8" stroke-linejoin="round" />
<path d="M565.0 472.4C565.9 471.9 568.6 470.0 570.5 469.2C572.4 468.4 574.7 467.6 576.6 467.3C578.5 467.0 580.5 467.1 582.0 467.6C583.5 468.1 584.9 469.8 585.5 470.2C584.6 470.4 582.2 471.3 580.0 471.6C577.8 471.9 575.0 472.1 572.5 472.2C570.0 472.3 566.2 472.4 565.0 472.4Z" fill="#bdbdb9" stroke="#111" stroke-width="0.8" stroke-linejoin="round" />
<path d="M569.5 470.6C570.6 470.4 574.0 469.6 576.0 469.4C578.0 469.2 579.9 469.3 581.5 469.4C583.1 469.5 584.8 470.1 585.5 470.2" fill="none" stroke="#222" stroke-width="0.7" stroke-linecap="round" stroke-linejoin="round" />
<path d="M527.4 437.4C527.6 438.5 527.7 441.6 528.4 444.0C529.1 446.4 529.7 449.3 531.6 452.0C533.5 454.7 536.5 457.6 540.0 460.2C543.5 462.8 548.0 465.5 552.6 467.6C557.2 469.7 565.1 471.8 567.6 472.6" fill="none" stroke="#111" stroke-width="1.25" stroke-linecap="round" stroke-linejoin="round" />
<path d="M464.9 474.5L527.4 437.4" fill="none" stroke="#111" stroke-width="1.25" stroke-linecap="round" stroke-linejoin="round" />
<path d="M274.0 365.2L337.0 328.6" fill="none" stroke="#111" stroke-width="1.25" stroke-linecap="round" stroke-linejoin="round" />
<path d="M205.1 358.9C208.2 360.5 217.2 365.2 223.9 368.6C230.6 372.0 239.6 376.9 245.2 379.4C250.8 381.9 254.2 383.0 257.7 383.7C261.2 384.4 263.9 384.2 266.4 383.4C268.8 382.6 271.1 380.6 272.4 378.9C273.7 377.2 273.7 374.0 274.0 373.0L274.0 365.2L464.9 474.5C465.1 475.6 465.6 478.2 466.2 481.0C466.8 483.8 466.9 487.3 468.4 491.0C469.9 494.7 472.0 498.5 475.2 503.0C478.4 507.5 482.7 512.8 487.7 517.8C492.7 522.8 499.9 528.6 505.3 532.8C510.7 537.0 515.1 539.7 520.3 542.8C525.5 545.9 533.9 550.0 536.6 551.4C538.4 552.8 544.7 556.3 547.4 559.6C550.1 562.9 551.5 567.1 552.6 571.0C553.7 574.9 553.9 581.0 554.1 583.0L554.1 620.3C553.7 621.8 553.5 626.8 551.6 629.0C549.7 631.2 546.3 633.3 542.8 633.3C539.2 633.3 536.5 631.9 530.3 628.8C524.0 625.7 513.6 619.5 505.3 614.6C497.0 609.7 488.1 604.2 480.2 599.4C472.3 594.6 464.8 590.4 458.0 585.6C451.2 580.8 445.7 576.1 439.3 570.8C432.9 565.5 426.2 560.1 419.7 553.6C413.1 547.1 406.6 539.1 400.0 531.6C393.4 524.1 386.3 515.8 380.0 508.4C373.7 501.0 366.3 491.4 362.4 487.0C358.5 482.6 357.6 482.7 356.6 481.8C352.2 482.6 338.9 485.5 330.3 486.4C321.8 487.3 312.8 487.6 305.3 487.2C297.8 486.8 292.3 486.1 285.2 483.9C278.1 481.7 274.8 480.4 262.7 473.9C250.6 467.4 223.7 452.2 212.6 445.1C201.5 438.0 200.2 435.5 196.0 431.0C191.8 426.5 189.3 422.2 187.6 418.0C185.8 413.8 185.8 408.0 185.5 406.0L185.5 372.0C185.8 370.5 185.9 365.4 187.4 363.0C188.9 360.6 191.7 358.1 194.6 357.4C197.5 356.7 203.3 358.6 205.1 358.9Z" fill="url(#gFr)" stroke="#111" stroke-width="1.25" stroke-linejoin="round" />
<g clip-path="url(#mclip)"><path d="M-5.0 86.7L6.5 80.0M-5.0 94.0L19.2 80.0M-5.0 101.3L31.9 80.0M-5.0 670.1L5.2 676.0M-5.0 115.9L57.2 80.0M-5.0 662.8L17.8 676.0M-5.0 123.2L69.8 80.0M-5.0 655.5L30.5 676.0M-5.0 130.5L82.5 80.0M-5.0 648.2L43.2 676.0M-5.0 137.8L95.2 80.0M-5.0 633.6L68.5 676.0M-5.0 152.4L120.5 80.0M-5.0 626.3L81.1 676.0M-5.0 159.7L133.1 80.0M-5.0 619.0L93.8 676.0M-5.0 167.0L145.8 80.0M-5.0 611.7L106.5 676.0M-5.0 174.3L158.5 80.0M-5.0 597.1L131.8 676.0M-5.0 188.9L183.8 80.0M-5.0 589.8L144.4 676.0M-5.0 196.2L196.4 80.0M-5.0 582.5L157.1 676.0M-5.0 203.5L209.1 80.0M-5.0 575.2L169.8 676.0M-5.0 210.8L221.8 80.0M-5.0 560.6L195.1 676.0M-5.0 225.4L247.1 80.0M-5.0 553.3L207.7 676.0M-5.0 232.7L259.7 80.0M-5.0 546.0L220.4 676.0M-5.0 240.0L272.4 80.0M-5.0 538.7L233.1 676.0M-5.0 247.3L285.1 80.0M-5.0 524.0L258.4 676.0M-5.0 262.0L310.4 80.0M-5.0 516.7L271.0 676.0M-5.0 269.3L323.0 80.0M-5.0 509.4L283.7 676.0M-5.0 276.6L335.7 80.0M-5.0 502.1L296.4 676.0M-5.0 283.9L348.4 80.0M-5.0 487.5L321.7 676.0M-5.0 298.5L373.7 80.0M-5.0 480.2L334.3 676.0M-5.0 305.8L386.3 80.0M-5.0 472.9L347.0 676.0M-5.0 313.1L399.0 80.0M-5.0 465.6L359.7 676.0M-5.0 320.4L411.7 80.0M-5.0 451.0L385.0 676.0M-5.0 335.0L437.0 80.0M-5.0 443.7L397.6 676.0M-5.0 342.3L449.6 80.0M-5.0 436.4L410.3 676.0M-5.0 349.6L462.3 80.0M-5.0 429.1L423.0 676.0M-5.0 356.9L475.0 80.0M-5.0 414.5L448.3 676.0M-5.0 371.5L500.3 80.0M-5.0 407.2L460.9 676.0M-5.0 378.8L512.9 80.0M-5.0 399.9L473.6 676.0M-5.0 386.1L525.6 80.0M-5.0 392.6L486.3 676.0M-5.0 393.4L538.3 80.0M-5.0 378.0L511.6 676.0M-5.0 408.0L563.6 80.0M-5.0 370.7L524.2 676.0M-5.0 415.3L576.2 80.0M-5.0 363.4L536.9 676.0M-5.0 422.6L588.9 80.0M-5.0 356.1L549.6 676.0M-5.0 429.9L601.6 80.0M-5.0 341.4L574.9 676.0M-5.0 444.6L626.9 80.0M-5.0 334.1L587.5 676.0M-5.0 451.9L639.5 80.0M-5.0 326.8L600.2 676.0M-5.0 459.2L652.2 80.0M-5.0 319.5L612.9 676.0M-5.0 466.5L664.9 80.0M-5.0 304.9L638.2 676.0M-5.0 481.1L690.2 80.0M-5.0 297.6L650.8 676.0M-5.0 488.4L702.8 80.0M-5.0 290.3L663.5 676.0M-5.0 495.7L715.5 80.0M-5.0 283.0L676.2 676.0M-5.0 503.0L728.2 80.0M-5.0 268.4L701.5 676.0M-5.0 517.6L753.5 80.0M-5.0 261.1L714.1 676.0M-5.0 524.9L766.1 80.0M-5.0 253.8L726.8 676.0M-5.0 532.2L778.8 80.0M-5.0 246.5L739.5 676.0M-5.0 539.5L791.5 80.0M-5.0 231.9L764.8 676.0M-5.0 554.1L816.8 80.0M-5.0 224.6L777.4 676.0M-5.0 561.4L829.4 80.0M-5.0 217.3L790.1 676.0M-5.0 568.7L842.1 80.0M-5.0 210.0L802.8 676.0M-5.0 576.0L854.8 80.0M-5.0 195.4L828.1 676.0M-5.0 590.6L880.1 80.0M-5.0 188.1L840.7 676.0M-5.0 597.9L892.7 80.0M-5.0 180.8L853.4 676.0M-5.0 605.2L905.4 80.0M-5.0 173.5L866.1 676.0M-5.0 612.5L918.1 80.0M-5.0 158.8L891.4 676.0M-5.0 627.2L943.4 80.0M-5.0 151.5L904.0 676.0M-5.0 634.5L956.0 80.0M-5.0 144.2L916.7 676.0M-5.0 641.8L968.7 80.0M-5.0 136.9L929.4 676.0M-5.0 649.1L981.4 80.0M-5.0 122.3L954.7 676.0M-5.0 663.7L1006.7 80.0M-5.0 115.0L967.3 676.0M-5.0 671.0L1019.3 80.0M-5.0 107.7L980.0 676.0M-1.0 676.0L1029.0 81.7M-5.0 100.4L992.7 676.0M11.6 676.0L1029.0 89.0M-5.0 85.8L1018.0 676.0M36.9 676.0L1029.0 103.6M-2.4 80.0L1029.0 675.1M49.6 676.0L1029.0 110.9M10.3 80.0L1029.0 667.7M62.3 676.0L1029.0 118.3M22.9 80.0L1029.0 660.4M74.9 676.0L1029.0 125.6M48.2 80.0L1029.0 645.8M100.2 676.0L1029.0 140.2M60.9 80.0L1029.0 638.5M112.9 676.0L1029.0 147.5M73.6 80.0L1029.0 631.2M125.6 676.0L1029.0 154.8M86.2 80.0L1029.0 623.9M138.2 676.0L1029.0 162.1M111.5 80.0L1029.0 609.3M163.5 676.0L1029.0 176.7M124.2 80.0L1029.0 602.0M176.2 676.0L1029.0 184.0M136.9 80.0L1029.0 594.7M188.9 676.0L1029.0 191.3M149.5 80.0L1029.0 587.4M201.5 676.0L1029.0 198.6M174.8 80.0L1029.0 572.8M226.8 676.0L1029.0 213.2M187.5 80.0L1029.0 565.5M239.5 676.0L1029.0 220.5M200.2 80.0L1029.0 558.2M252.2 676.0L1029.0 227.8M212.8 80.0L1029.0 550.9M264.8 676.0L1029.0 235.1M238.1 80.0L1029.0 536.3M290.1 676.0L1029.0 249.7M250.8 80.0L1029.0 529.0M302.8 676.0L1029.0 257.0M263.5 80.0L1029.0 521.7M315.5 676.0L1029.0 264.3M276.1 80.0L1029.0 514.4M328.1 676.0L1029.0 271.6M301.4 80.0L1029.0 499.8M353.4 676.0L1029.0 286.2M314.1 80.0L1029.0 492.5M366.1 676.0L1029.0 293.5M326.8 80.0L1029.0 485.1M378.8 676.0L1029.0 300.9M339.4 80.0L1029.0 477.8M391.4 676.0L1029.0 308.2M364.7 80.0L1029.0 463.2M416.7 676.0L1029.0 322.8M377.4 80.0L1029.0 455.9M429.4 676.0L1029.0 330.1M390.1 80.0L1029.0 448.6M442.1 676.0L1029.0 337.4M402.7 80.0L1029.0 441.3M454.7 676.0L1029.0 344.7M428.0 80.0L1029.0 426.7M480.0 676.0L1029.0 359.3M440.7 80.0L1029.0 419.4M492.7 676.0L1029.0 366.6M453.4 80.0L1029.0 412.1M505.4 676.0L1029.0 373.9M466.0 80.0L1029.0 404.8M518.0 676.0L1029.0 381.2M491.3 80.0L1029.0 390.2M543.3 676.0L1029.0 395.8M504.0 80.0L1029.0 382.9M556.0 676.0L1029.0 403.1M516.7 80.0L1029.0 375.6M568.7 676.0L1029.0 410.4M529.3 80.0L1029.0 368.3M581.3 676.0L1029.0 417.7M554.6 80.0L1029.0 353.7M606.6 676.0L1029.0 432.3M567.3 80.0L1029.0 346.4M619.3 676.0L1029.0 439.6M580.0 80.0L1029.0 339.1M632.0 676.0L1029.0 446.9M592.6 80.0L1029.0 331.8M644.6 676.0L1029.0 454.2M617.9 80.0L1029.0 317.2M669.9 676.0L1029.0 468.8M630.6 80.0L1029.0 309.9M682.6 676.0L1029.0 476.1M643.3 80.0L1029.0 302.5M695.3 676.0L1029.0 483.5M655.9 80.0L1029.0 295.2M707.9 676.0L1029.0 490.8M681.2 80.0L1029.0 280.6M733.2 676.0L1029.0 505.4M693.9 80.0L1029.0 273.3M745.9 676.0L1029.0 512.7M706.6 80.0L1029.0 266.0M758.6 676.0L1029.0 520.0M719.2 80.0L1029.0 258.7M771.2 676.0L1029.0 527.3M744.5 80.0L1029.0 244.1M796.5 676.0L1029.0 541.9M757.2 80.0L1029.0 236.8M809.2 676.0L1029.0 549.2M769.9 80.0L1029.0 229.5M821.9 676.0L1029.0 556.5M782.5 80.0L1029.0 222.2M834.5 676.0L1029.0 563.8M807.8 80.0L1029.0 207.6M859.8 676.0L1029.0 578.4M820.5 80.0L1029.0 200.3M872.5 676.0L1029.0 585.7M833.2 80.0L1029.0 193.0M885.2 676.0L1029.0 593.0M845.8 80.0L1029.0 185.7M897.8 676.0L1029.0 600.3M871.1 80.0L1029.0 171.1M923.1 676.0L1029.0 614.9M883.8 80.0L1029.0 163.8M935.8 676.0L1029.0 622.2M896.5 80.0L1029.0 156.5M948.5 676.0L1029.0 629.5M909.1 80.0L1029.0 149.2M961.1 676.0L1029.0 636.8M934.4 80.0L1029.0 134.6M986.4 676.0L1029.0 651.4M947.1 80.0L1029.0 127.3M999.1 676.0L1029.0 658.7M959.8 80.0L1029.0 119.9M1011.8 676.0L1029.0 666.1M972.4 80.0L1029.0 112.6M1024.4 676.0L1029.0 673.4M997.7 80.0L1029.0 98.0M1010.4 80.0L1029.0 90.7M1023.1 80.0L1029.0 83.4" stroke="#000" stroke-opacity="0.02" stroke-width="1" fill="none"/>
<path d="M-5.0 108.6L44.5 80.0M-5.0 640.9L55.8 676.0M-5.0 145.1L107.8 80.0M-5.0 604.4L119.1 676.0M-5.0 181.6L171.1 80.0M-5.0 567.9L182.4 676.0M-5.0 218.1L234.4 80.0M-5.0 531.3L245.7 676.0M-5.0 254.7L297.7 80.0M-5.0 494.8L309.0 676.0M-5.0 291.2L361.0 80.0M-5.0 458.3L372.3 676.0M-5.0 327.7L424.3 80.0M-5.0 421.8L435.6 676.0M-5.0 364.2L487.6 80.0M-5.0 385.3L498.9 676.0M-5.0 400.7L550.9 80.0M-5.0 348.7L562.2 676.0M-5.0 437.3L614.2 80.0M-5.0 312.2L625.5 676.0M-5.0 473.8L677.5 80.0M-5.0 275.7L688.8 676.0M-5.0 510.3L740.8 80.0M-5.0 239.2L752.1 676.0M-5.0 546.8L804.1 80.0M-5.0 202.7L815.4 676.0M-5.0 583.3L867.4 80.0M-5.0 129.6L942.0 676.0M-5.0 656.4L994.0 80.0M-5.0 93.1L1005.3 676.0M24.3 676.0L1029.0 96.3M35.6 80.0L1029.0 653.1M87.6 676.0L1029.0 132.9M98.9 80.0L1029.0 616.6M150.9 676.0L1029.0 169.4M162.2 80.0L1029.0 580.1M214.2 676.0L1029.0 205.9M225.5 80.0L1029.0 543.6M277.5 676.0L1029.0 242.4M288.8 80.0L1029.0 507.1M340.8 676.0L1029.0 278.9M352.1 80.0L1029.0 470.5M404.1 676.0L1029.0 315.5M415.4 80.0L1029.0 434.0M467.4 676.0L1029.0 352.0M478.7 80.0L1029.0 397.5M530.7 676.0L1029.0 388.5M542.0 80.0L1029.0 361.0M594.0 676.0L1029.0 425.0M605.3 80.0L1029.0 324.5M657.3 676.0L1029.0 461.5M668.6 80.0L1029.0 287.9M720.6 676.0L1029.0 498.1M731.9 80.0L1029.0 251.4M783.9 676.0L1029.0 534.6M795.2 80.0L1029.0 214.9M847.2 676.0L1029.0 571.1M858.5 80.0L1029.0 178.4M910.5 676.0L1029.0 607.6M921.8 80.0L1029.0 141.9M973.8 676.0L1029.0 644.1M985.1 80.0L1029.0 105.3" stroke="#000" stroke-opacity="0.11" stroke-width="1" fill="none"/>
<path d="M-5.0 166.1L878.7 676.0" stroke="#c04848" stroke-opacity="0.5" stroke-width="1" fill="none"/>
<path d="M-5.0 619.9L930.7 80.0" stroke="#43c043" stroke-opacity="0.6" stroke-width="1" fill="none"/></g>
<path d="M354.4 346.4L459.4 406.6L429.6 422.6L345.9 373.9Z" fill="url(#gBk)" stroke="none" stroke-width="1.0" stroke-linejoin="round" />
<path d="M413.8 380.3C414.0 382.8 414.2 390.4 414.8 395.0C415.4 399.6 416.4 404.3 417.2 408.0C418.0 411.7 419.4 415.7 419.8 417.2L429.6 422.6L459.4 406.6Z" fill="url(#gBk2)" stroke="none" stroke-width="1.0" stroke-linejoin="round" />
<path d="M413.8 380.3C414.0 382.8 414.2 390.4 414.8 395.0C415.4 399.6 416.4 404.3 417.2 408.0C418.0 411.7 419.4 415.7 419.8 417.2" fill="none" stroke="#111" stroke-width="1.05" stroke-linecap="round" stroke-linejoin="round" />
<path d="M354.4 338.2L468.0 403.2L459.4 406.6L354.4 346.4Z" fill="#807c75" stroke="#111" stroke-width="1.05" stroke-linejoin="round" />
<path d="M312.0 354.7L354.4 329.6L354.4 352.1L331.4 365.5Z" fill="url(#gIL)" stroke="none" stroke-width="1.0" stroke-linejoin="round" />
<path d="M331.4 365.5L354.4 352.1C354.2 353.7 354.0 358.8 353.4 361.5C352.8 364.2 351.9 366.5 350.6 368.6C349.4 370.7 346.7 373.0 345.9 373.9Z" fill="#4a4744" stroke="#111" stroke-width="1.05" stroke-linejoin="round" />
<path d="M354.4 329.6L354.4 352.1" fill="none" stroke="#111" stroke-width="1.25" stroke-linecap="round" stroke-linejoin="round" />
<path d="M297.0 354.7L346.9 325.4L354.4 329.6L312.0 354.7Z" fill="#807c75" stroke="none" stroke-width="1.0" stroke-linejoin="round" />
<path d="M297.0 354.7L430.0 431.0L429.6 422.6L312.0 354.7Z" fill="#807c75" stroke="none" stroke-width="1.0" stroke-linejoin="round" />
<path d="M430.0 431.0L478.0 402.0L470.4 397.6L460.4 405.0L429.6 422.6Z" fill="#807c75" stroke="none" stroke-width="1.0" stroke-linejoin="round" />
<path d="M430.0 431.0L297.0 354.7L346.9 325.4L354.4 329.6L312.0 354.7L429.6 422.6L460.4 405.0" fill="none" stroke="#111" stroke-width="1.2" stroke-linecap="round" stroke-linejoin="round" />
<path d="M430.0 431.0L478.0 402.0L470.4 397.6L460.4 405.0" fill="none" stroke="#111" stroke-width="1.2" stroke-linecap="round" stroke-linejoin="round" />
<path d="M297.0 354.7L430.0 431.0L430.0 445.4L297.0 368.7Z" fill="url(#gBf)" stroke="#111" stroke-width="1.2" stroke-linejoin="round" />
<path d="M430.0 431.0L450.6 419.2L450.6 433.6L430.0 445.4Z" fill="url(#gBr)" stroke="#111" stroke-width="1.2" stroke-linejoin="round" />
<path d="M485.1 425.4L507.7 412.6L507.7 448.5L485.1 461.4Z" fill="#5f5b55" stroke="#111" stroke-width="1.2" stroke-linejoin="round" />
<path d="M467.4 414.2L488.4 401.3L507.7 412.6L485.1 425.4Z" fill="#7a756d" stroke="#111" stroke-width="1.2" stroke-linejoin="round" />
<path d="M452.0 415.6L476.4 401.0C476.9 400.7 478.4 399.5 479.6 399.2C480.8 398.9 482.1 398.6 483.6 399.0C485.1 399.4 487.6 400.9 488.4 401.3L467.4 414.2C466.7 413.9 464.7 412.6 463.4 412.2C462.1 411.8 460.7 411.8 459.4 412.0C458.1 412.2 456.6 412.6 455.4 413.2C454.2 413.8 452.6 415.2 452.0 415.6Z" fill="url(#gLc)" stroke="#111" stroke-width="1.05" stroke-linejoin="round" />
<path d="M450.6 441.3L450.6 419.5C450.8 418.9 451.2 416.7 452.0 415.6C452.8 414.6 454.2 413.8 455.4 413.2C456.6 412.6 458.1 412.2 459.4 412.0C460.7 411.8 462.1 411.8 463.4 412.2C464.7 412.6 466.7 413.9 467.4 414.2L485.1 425.4L485.1 461.4Z" fill="url(#gLf)" stroke="#111" stroke-width="1.25" stroke-linejoin="round" />
<circle r="8.5" transform="matrix(0.866,0.5,0,1,464.6,428.2)" fill="url(#gHo)" stroke="#111" stroke-width="1.25"/>
<g opacity="0.999"><text transform="translate(2.50,-1.45) matrix(0.6192,0.3575,0,1,347.6,439.8)" font-family="Liberation Sans" font-weight="bold" font-size="31" stroke-linejoin="round" fill="#1c1c1b" stroke="#1c1c1b" stroke-width="2.7">Frog</text><text transform="translate(1.88,-1.09) matrix(0.6192,0.3575,0,1,347.6,439.8)" font-family="Liberation Sans" font-weight="bold" font-size="31" stroke-linejoin="round" fill="#1c1c1b" stroke="#1c1c1b" stroke-width="2.7">Frog</text><text transform="translate(1.25,-0.72) matrix(0.6192,0.3575,0,1,347.6,439.8)" font-family="Liberation Sans" font-weight="bold" font-size="31" stroke-linejoin="round" fill="#1c1c1b" stroke="#1c1c1b" stroke-width="2.7">Frog</text><text transform="translate(0.62,-0.36) matrix(0.6192,0.3575,0,1,347.6,439.8)" font-family="Liberation Sans" font-weight="bold" font-size="31" stroke-linejoin="round" fill="#1c1c1b" stroke="#1c1c1b" stroke-width="2.7">Frog</text><text transform="translate(0.00,-0.00) matrix(0.6192,0.3575,0,1,347.6,439.8)" font-family="Liberation Sans" font-weight="bold" font-size="31" stroke-linejoin="round" fill="#1c1c1b" stroke="#1c1c1b" stroke-width="2.7">Frog</text><text transform="translate(2.5,-1.45) matrix(0.6192,0.3575,0,1,347.6,439.8)" font-family="Liberation Sans" font-weight="bold" font-size="31" stroke-linejoin="round" fill="#44423f" stroke="#44423f" stroke-width="0.5">Frog</text><text transform="translate(1.4,-0.8) matrix(0.6192,0.3575,0,1,347.6,439.8)" font-family="Liberation Sans" font-weight="bold" font-size="31" stroke-linejoin="round" fill="#3a3836" stroke="#3a3836" stroke-width="0.5">Frog</text><text transform="matrix(0.6192,0.3575,0,1,347.6,439.8)" font-family="Liberation Sans" font-weight="bold" font-size="31" stroke-linejoin="round" fill="#151514" stroke="#151514" stroke-width="2.7">Frog</text><text transform="matrix(0.6192,0.3575,0,1,347.6,439.8)" font-family="Liberation Sans" font-weight="bold" font-size="31" stroke-linejoin="round" fill="#5f5c57" stroke="#5f5c57" stroke-width="0.55">Frog</text><text transform="translate(2.50,-1.45) matrix(0.8573,0.4950,0,1,289.0,441.6)" font-family="Liberation Sans" font-weight="bold" font-size="32.5" stroke-linejoin="round" fill="#1c1c1b" stroke="#1c1c1b" stroke-width="2.7">twin header</text><text transform="translate(1.88,-1.09) matrix(0.8573,0.4950,0,1,289.0,441.6)" font-family="Liberation Sans" font-weight="bold" font-size="32.5" stroke-linejoin="round" fill="#1c1c1b" stroke="#1c1c1b" stroke-width="2.7">twin header</text><text transform="translate(1.25,-0.72) matrix(0.8573,0.4950,0,1,289.0,441.6)" font-family="Liberation Sans" font-weight="bold" font-size="32.5" stroke-linejoin="round" fill="#1c1c1b" stroke="#1c1c1b" stroke-width="2.7">twin header</text><text transform="translate(0.62,-0.36) matrix(0.8573,0.4950,0,1,289.0,441.6)" font-family="Liberation Sans" font-weight="bold" font-size="32.5" stroke-linejoin="round" fill="#1c1c1b" stroke="#1c1c1b" stroke-width="2.7">twin header</text><text transform="translate(0.00,-0.00) matrix(0.8573,0.4950,0,1,289.0,441.6)" font-family="Liberation Sans" font-weight="bold" font-size="32.5" stroke-linejoin="round" fill="#1c1c1b" stroke="#1c1c1b" stroke-width="2.7">twin header</text><text transform="translate(2.5,-1.45) matrix(0.8573,0.4950,0,1,289.0,441.6)" font-family="Liberation Sans" font-weight="bold" font-size="32.5" stroke-linejoin="round" fill="#44423f" stroke="#44423f" stroke-width="0.5">twin header</text><text transform="translate(1.4,-0.8) matrix(0.8573,0.4950,0,1,289.0,441.6)" font-family="Liberation Sans" font-weight="bold" font-size="32.5" stroke-linejoin="round" fill="#3a3836" stroke="#3a3836" stroke-width="0.5">twin header</text><text transform="matrix(0.8573,0.4950,0,1,289.0,441.6)" font-family="Liberation Sans" font-weight="bold" font-size="32.5" stroke-linejoin="round" fill="#151514" stroke="#151514" stroke-width="2.7">twin header</text><text transform="matrix(0.8573,0.4950,0,1,289.0,441.6)" font-family="Liberation Sans" font-weight="bold" font-size="32.5" stroke-linejoin="round" fill="#5f5c57" stroke="#5f5c57" stroke-width="0.55">twin header</text></g>
<g clip-path="url(#bclip)"><path d="M-5.0 166.1L878.7 676.0" stroke="#8a3030" stroke-opacity="0.5" stroke-width="1" fill="none"/>
<path d="M-5.0 619.9L930.7 80.0" stroke="#2f8a2f" stroke-opacity="0.7" stroke-width="1" fill="none"/></g>
</svg>
<div id="bluebar"></div><div id="tabbar"></div><div id="tabgap"></div><div id="hometab"></div><div id="doctab"></div><div id="plusbtn"></div>
<div id="toolbar"></div><div id="tbshadow"></div><div id="design"></div>
<div class="sep" style="left:287.0px"></div>
<div class="sep" style="left:484.0px"></div>
<div class="sep" style="left:555.0px"></div>
<div class="sep" style="left:627.0px"></div>
<div class="sep" style="left:684.5px"></div>
<div class="sep" style="left:735.5px"></div>
<div class="t" style="left:493.0px;top:17.3px;font-size:10.50px;color:#3c3c3c;transform:scaleX(0.8310);">Frog extruder cooling duct v7</div>
<div class="t" style="left:966.7px;top:15.9px;font-size:9.50px;color:#333;transform:scaleX(0.8434);">3 of 10</div>
<div class="t" style="left:31.0px;top:57.6px;font-size:8.60px;color:#3a3a3a;font-weight:bold;transform:scaleX(0.8492);">DESIGN</div>
<div class="t" style="left:110.0px;top:36.4px;font-size:8.60px;color:#2d8fb8;transform:scaleX(0.9106);">SOLID</div>
<div class="t" style="left:166.0px;top:36.4px;font-size:8.60px;color:#444;transform:scaleX(0.8493);">SURFACE</div>
<div class="t" style="left:234.0px;top:36.4px;font-size:8.60px;color:#444;transform:scaleX(0.8250);">MESH</div>
<div class="t" style="left:288.0px;top:36.4px;font-size:8.60px;color:#444;transform:scaleX(0.8229);">SHEET METAL</div>
<div class="t" style="left:370.0px;top:36.4px;font-size:8.60px;color:#444;transform:scaleX(0.8648);">PLASTIC</div>
<div class="t" style="left:434.0px;top:36.4px;font-size:8.60px;color:#444;transform:scaleX(0.8097);">UTILITIES</div>
<div class="abs" style="left:101px;top:49px;width:41px;height:2px;background:#3aa0c8"></div>
<div class="t" style="left:172.0px;top:80.1px;font-size:8.60px;color:#3c3c3c;transform:scaleX(0.8030);">CREATE</div>
<div class="t" style="left:367.0px;top:80.1px;font-size:8.60px;color:#3c3c3c;transform:scaleX(0.7924);">MODIFY</div>
<div class="t" style="left:496.0px;top:80.1px;font-size:8.60px;color:#3c3c3c;transform:scaleX(0.8304);">ASSEMBLE</div>
<div class="t" style="left:565.0px;top:80.1px;font-size:8.60px;color:#3c3c3c;transform:scaleX(0.8336);">CONSTRUCT</div>
<div class="t" style="left:637.0px;top:80.1px;font-size:8.60px;color:#3c3c3c;transform:scaleX(0.8049);">INSPECT</div>
<div class="t" style="left:695.0px;top:80.1px;font-size:8.60px;color:#3c3c3c;transform:scaleX(0.8126);">INSERT</div>
<div class="t" style="left:745.0px;top:80.1px;font-size:8.60px;color:#3c3c3c;transform:scaleX(0.8220);">SELECT</div>
<div id="robar"></div>
<div class="abs" style="left:608px;top:99px;width:1px;height:16px;background:#dcdcdc"></div>
<div class="t" style="left:454.5px;top:102.0px;font-size:8.60px;color:#333;font-weight:bold;transform:scaleX(0.9266);">Read-Only:</div>
<div class="t" style="left:513.0px;top:102.0px;font-size:8.60px;color:#333;transform:scaleX(0.9033);">Document is not editable</div>
<div class="t" style="left:617.5px;top:102.0px;font-size:8.60px;color:#2a7aa8;transform:scaleX(0.8716);">Make Editable</div>
<div id="brhead"></div>
<div class="t" style="left:21.3px;top:102.1px;font-size:8.60px;color:#555;transform:scaleX(0.8439);">BROWSER</div>
<div class="lbl" style="left:30px;top:122.4px;width:186px;height:11.6px"></div>
<div class="lbl" style="left:48px;top:122.4px;width:151px;height:11.6px;background:#8e8e8e"></div>
<div class="t" style="left:71.5px;top:123.0px;font-size:8.80px;color:#fff;font-weight:bold;transform:scaleX(0.9462);">Frog extruder cooling duct v7</div>
<div class="lbl" style="left:42px;top:139.2px;width:97px"></div>
<div class="t" style="left:66.5px;top:140.5px;font-size:8.80px;color:#2f2f2f;transform:scaleX(0.8810);">Document Settings</div>
<div class="lbl" style="left:42px;top:156.7px;width:80px"></div>
<div class="t" style="left:66.5px;top:158.0px;font-size:8.80px;color:#2f2f2f;transform:scaleX(0.9145);">Named Views</div>
<div class="lbl" style="left:42px;top:174.2px;width:69px"></div>
<div class="t" style="left:85.0px;top:175.5px;font-size:8.80px;color:#2f2f2f;transform:scaleX(0.8521);">Origin</div>
<div class="lbl" style="left:42px;top:191.6px;width:74px"></div>
<div class="t" style="left:85.0px;top:192.9px;font-size:8.80px;color:#2f2f2f;transform:scaleX(0.8734);">Bodies</div>
<div class="lbl" style="left:42px;top:209.1px;width:84px"></div>
<div class="t" style="left:85.0px;top:210.4px;font-size:8.80px;color:#2f2f2f;transform:scaleX(0.8841);">Sketches</div>
<div class="lbl" style="left:42px;top:226.6px;width:95px"></div>
<div class="t" style="left:85.0px;top:227.9px;font-size:8.80px;color:#2f2f2f;transform:scaleX(0.8907);">Construction</div>
<svg class="abs" style="left:0;top:0" width="1024" height="671" viewBox="0 0 1024 671"><rect x="6.7" y="16.8" width="2.9" height="2.9" fill="#4f4f4f"/>
<rect x="6.7" y="20.5" width="2.9" height="2.9" fill="#4f4f4f"/>
<rect x="6.7" y="24.2" width="2.9" height="2.9" fill="#4f4f4f"/>
<rect x="10.4" y="16.8" width="2.9" height="2.9" fill="#4f4f4f"/>
<rect x="10.4" y="20.5" width="2.9" height="2.9" fill="#4f4f4f"/>
<rect x="10.4" y="24.2" width="2.9" height="2.9" fill="#4f4f4f"/>
<rect x="14.1" y="16.8" width="2.9" height="2.9" fill="#4f4f4f"/>
<rect x="14.1" y="20.5" width="2.9" height="2.9" fill="#4f4f4f"/>
<rect x="14.1" y="24.2" width="2.9" height="2.9" fill="#4f4f4f"/>
<path d="M31 16H36.6L40.4 19.8V27.3H31Z" fill="#555"/><path d="M36.6 16V19.8H40.4Z" fill="#d3d3d3" stroke="#555" stroke-width="0.6"/>
<path d="M44.8 20L49.4 20L47.1 22.6Z" fill="#444"/>
<path d="M63.8 16.8H71.6L73.6 18.8V26.6H63.8Z" fill="#8f8f8f"/><rect x="65.6" y="17.8" width="5.2" height="3" fill="#d3d3d3"/><rect x="65.6" y="22.6" width="6.2" height="4" fill="#d3d3d3"/><rect x="67.2" y="23.4" width="1.6" height="2.4" fill="#8f8f8f"/>
<path d="M92.5 17.2L88.6 20.7L92.5 24.2" fill="none" stroke="#8a8a8a" stroke-width="1.5"/><path d="M88.9 20.7H93.2Q96.6 21 96.4 26.2" fill="none" stroke="#8a8a8a" stroke-width="1.5"/>
<path d="M102.8 20L107 20L104.9 22.4Z" fill="#8a8a8a"/>
<path d="M121.5 17.2L125.4 20.7L121.5 24.2" fill="none" stroke="#8a8a8a" stroke-width="1.5"/><path d="M125.1 20.7H120.8Q117.4 21 117.6 26.2" fill="none" stroke="#8a8a8a" stroke-width="1.5"/>
<path d="M131.3 20L135.5 20L133.4 22.4Z" fill="#8a8a8a"/>
<path d="M150.6 23.8L155.9 19.2L161.2 23.8H159.8V28.2H157V25.2H154.8V28.2H152V23.8Z" fill="#7d7d7d"/><rect x="158.6" y="19.8" width="1.4" height="2.4" fill="#7d7d7d"/>
<rect x="479.9" y="23.2" width="7.6" height="5" rx="0.8" fill="#e4e4e4" stroke="#6a6a6a" stroke-width="1.1"/><path d="M480 25.6H487.4" stroke="#8a8a8a" stroke-width="0.7"/><path d="M481.6 23V21.8a2.1 2.1 0 0 1 4.2 0V23" fill="none" stroke="#6a6a6a" stroke-width="1.1"/>
<path d="M909.4 20.4L915.4 26.4M915.4 20.4L909.4 26.4" stroke="#555" stroke-width="1.2"/>
<path d="M929 23.3H938.6M933.8 18.5V28.1" stroke="#666" stroke-width="1.8"/>
<path d="M952.4 16.6H958.4L961 19.4V22L955 28.2H952.4Z" fill="#5a5a5a"/><path d="M956.4 27.8L957 25.2L962.2 20L964 21.8L958.8 27Z" fill="#5a5a5a" stroke="#d3d3d3" stroke-width="0.7"/>
<circle cx="1014.4" cy="22.4" r="5.3" fill="#5a5a5a"/><circle cx="1014.4" cy="22.4" r="3.9" fill="none" stroke="#d3d3d3" stroke-width="0.8"/><path d="M1014.4 19.6V22.6H1016.8" fill="none" stroke="#d3d3d3" stroke-width="1"/>
<path d="M7 107.5L10 105.3V109.7ZM10.6 107.5L13.6 105.3V109.7Z" fill="#333"/>
<circle cx="209.7" cy="107.5" r="2.9" fill="#222"/><rect x="208" y="107" width="3.4" height="1" fill="#fff"/>
<path d="M218.6 103.5V111.5" stroke="#999" stroke-width="1.2"/>
<path d="M15.2 131.4H23.2V123.4Z" fill="#9a9a9a" stroke="#333" stroke-width="1"/>
<path d="M31.0 128.2Q36.8 121.6 42.6 128.2Q36.8 134.8 31.0 128.2Z" fill="#8c8c8c"/><circle cx="36.8" cy="128.2" r="2.3" fill="#f0f0f0"/><circle cx="36.8" cy="128.2" r="1.3" fill="#8c8c8c"/>
<path d="M50.6 125Q50.6 124.2 51.4 124.2H58L60.4 122.8V131L58 132.8H51.4Q50.6 132.8 50.6 132Z" fill="#f6f6f6" stroke="#777" stroke-width="0.8"/><path d="M58 124.2V132.8" stroke="#999" stroke-width="0.6" fill="none"/>
<circle cx="205.6" cy="128.2" r="4.3" fill="#fff" stroke="#333" stroke-width="1"/><circle cx="205.6" cy="128.2" r="1.9" fill="#222"/>
<path d="M29.6 140.4L35.6 145.2L29.6 150.0Z" fill="#fff" stroke="#2b2b2b" stroke-width="1.1" stroke-linejoin="round"/>
<path d="M29.6 157.9L35.6 162.7L29.6 167.5Z" fill="#fff" stroke="#2b2b2b" stroke-width="1.1" stroke-linejoin="round"/>
<path d="M29.6 175.4L35.6 180.2L29.6 185.0Z" fill="#fff" stroke="#2b2b2b" stroke-width="1.1" stroke-linejoin="round"/>
<path d="M29.6 192.8L35.6 197.6L29.6 202.4Z" fill="#fff" stroke="#2b2b2b" stroke-width="1.1" stroke-linejoin="round"/>
<path d="M29.6 210.3L35.6 215.1L29.6 219.9Z" fill="#fff" stroke="#2b2b2b" stroke-width="1.1" stroke-linejoin="round"/>
<path d="M29.6 227.8L35.6 232.6L29.6 237.4Z" fill="#fff" stroke="#2b2b2b" stroke-width="1.1" stroke-linejoin="round"/>
<path d="M56.19 145.59L55.89 147.09L54.07 147.06L53.46 147.97L54.19 149.64L52.91 150.49L51.65 149.18L50.58 149.39L49.91 151.09L48.41 150.79L48.44 148.97L47.53 148.36L45.86 149.09L45.01 147.81L46.32 146.55L46.11 145.48L44.41 144.81L44.71 143.31L46.53 143.34L47.14 142.43L46.41 140.76L47.69 139.91L48.95 141.22L50.02 141.01L50.69 139.31L52.19 139.61L52.16 141.43L53.07 142.04L54.74 141.31L55.59 142.59L54.28 143.85L54.49 144.92Z" fill="#8c8c8c"/><circle cx="50.3" cy="145.2" r="2" fill="#f0f0f0"/>
<path d="M44.4 158.2H49.0L50.2 159.8H56.2V167.4H44.4Z" fill="#8c8c8c"/>
<path d="M44.6 180.2Q50.2 174.2 55.8 180.2Q50.2 186.2 44.6 180.2Z" fill="none" stroke="#b0b0b0" stroke-width="0.9"/><circle cx="50.2" cy="180.2" r="1.8" fill="none" stroke="#b0b0b0" stroke-width="0.9"/><path d="M46.0 176.6L54.4 183.8" stroke="#b0b0b0" stroke-width="1"/>
<path d="M44.4 197.6Q50.2 191.0 56.0 197.6Q50.2 204.2 44.4 197.6Z" fill="#8c8c8c"/><circle cx="50.2" cy="197.6" r="2.3" fill="#f0f0f0"/><circle cx="50.2" cy="197.6" r="1.3" fill="#8c8c8c"/>
<path d="M44.4 215.1Q50.2 208.5 56.0 215.1Q50.2 221.7 44.4 215.1Z" fill="#8c8c8c"/><circle cx="50.2" cy="215.1" r="2.3" fill="#f0f0f0"/><circle cx="50.2" cy="215.1" r="1.3" fill="#8c8c8c"/>
<path d="M44.4 232.6Q50.2 226.0 56.0 232.6Q50.2 239.2 44.4 232.6Z" fill="#8c8c8c"/><circle cx="50.2" cy="232.6" r="2.3" fill="#f0f0f0"/><circle cx="50.2" cy="232.6" r="1.3" fill="#8c8c8c"/>
<path d="M62.6 175.5H67.2L68.4 177.1H74.4V184.7H62.6Z" fill="#8c8c8c"/>
<path d="M62.6 192.9H67.2L68.4 194.5H74.4V202.1H62.6Z" fill="#8c8c8c"/>
<path d="M62.6 210.4H67.2L68.4 212.0H74.4V219.6H62.6Z" fill="#8c8c8c"/>
<path d="M62.6 227.9H67.2L68.4 229.5H74.4V237.1H62.6Z" fill="#8c8c8c"/><rect x="101" y="54" width="20" height="20" fill="none" stroke="#555" stroke-width="0.9"/>
<rect x="100.0" y="53.0" width="2" height="2" fill="#333"/>
<rect x="120.0" y="53.0" width="2" height="2" fill="#333"/>
<rect x="100.0" y="73.0" width="2" height="2" fill="#333"/>
<rect x="110.0" y="53.0" width="2" height="2" fill="#333"/>
<rect x="100.0" y="63.0" width="2" height="2" fill="#333"/>
<path d="M106.5 68.6V59.4H118Q117.5 67.5 106.5 68.6Z" fill="#eee" stroke="#555" stroke-width="0.9"/>
<rect x="105.6" y="58.5" width="1.8" height="1.8" fill="#333"/>
<rect x="117.1" y="58.5" width="1.8" height="1.8" fill="#333"/>
<rect x="105.6" y="67.7" width="1.8" height="1.8" fill="#333"/>
<path d="M117.2 66.4H120.4V70H124V73.2H120.4V76.8H117.2V73.2H113.6V70H117.2Z" fill="#35a24f"/>
<path d="M132.2 72.2H146.2L150 69.4V73L146.2 75.8H132.2Z" fill="#b4b4b4"/>
<path d="M132.2 72.2H146.2V75.8H132.2Z" fill="#d8d8d8"/>
<rect x="132.2" y="56.4" width="14" height="15.8" fill="#5aa4e0"/>
<path d="M132.2 56.4L136.6 53.2H150L146.2 56.4Z" fill="#8cc4f0"/>
<path d="M146.2 56.4L150 53.2V69.4L146.2 72.2Z" fill="#3d86c6"/>
<path d="M152.3 71.8V56" stroke="#333" stroke-width="1"/><path d="M150.6 57.6L152.3 53.8L154 57.6Z" fill="#333"/>
<path d="M163 64Q174.5 55.2 186.4 63.4V69.6Q174.5 62 163 70Z" fill="#8cc4f0"/>
<path d="M163 64.4L169 68Q174.6 64.8 181.6 68.4L186.4 63.6Q174.5 55.4 163 64.4Z" fill="#8cc4f0"/>
<path d="M163 64.4L169 68.4Q174.6 65.2 181.6 68.8V74.8Q174.6 71.4 169 74.6L163 70.6Z" fill="#5aa4e0"/>
<path d="M181.6 68.8L186.4 63.6V69.8L181.6 74.8Z" fill="#fff" stroke="#666" stroke-width="0.7"/>
<path d="M165.2 58.2Q174.6 51.6 184.4 58.4" fill="none" stroke="#333" stroke-width="1"/><path d="M163.6 59.6L164.6 55.6L167.8 58.6Z" fill="#333"/>
<path d="M194.4 57.4L199 53.2H217.4V71.6L212.8 75.8H194.4Z" fill="#ececec" stroke="#8a8a8a" stroke-width="0.8"/>
<rect x="194.4" y="57.4" width="18.4" height="18.4" fill="#d8d8d8" stroke="#8a8a8a" stroke-width="0.8"/>
<path d="M212.8 57.4L217.4 53.2V71.6L212.8 75.8Z" fill="#b4b4b4" stroke="#8a8a8a" stroke-width="0.6"/>
<circle cx="203.6" cy="66.6" r="5.4" fill="#5aa4e0" stroke="#6d7f90" stroke-width="0.9"/>
<path d="M203.2 62.4A4.2 4.2 0 0 1 207.8 66.8A3.6 3.6 0 0 1 203.2 62.4Z" fill="#e4f0fa"/>
<path d="M228.2 56.8H243.4M228.2 56.8V72.2M228.2 72.2H243.4" stroke="#555" stroke-width="0.9" fill="none"/>
<rect x="226" y="54.6" width="4.4" height="4.4" fill="#fff" stroke="#555" stroke-width="0.8"/>
<rect x="241.2" y="54.6" width="4.6" height="4.6" fill="#5aa0d8"/>
<rect x="226.0" y="70.0" width="4.6" height="4.6" fill="#5aa0d8"/>
<rect x="241.2" y="70.0" width="4.6" height="4.6" fill="#5aa0d8"/>
<path d="M257.2 62Q257.2 58 261 57L266 55.6Q268.4 55 270.6 55.8L276 58Q278.6 59.4 278.6 62V70Q278.6 73 276 74.2L270.6 76.4Q268.4 77.2 266 76.6L261 75Q257.2 73.8 257.2 70Z" fill="#a184dc" stroke="#7a5fb8" stroke-width="0.8"/>
<path d="M259 61.6Q264 58.6 270 60.4V75Q264 73.6 259 70.4Z" fill="#b79cec"/>
<path d="M264.4 60V73M259 66.2Q264 64.6 270 67" stroke="#8a6ccc" stroke-width="0.8" fill="none"/>
<path d="M274.4 54.4L275.4 57.2L278.1 55.9L276.8 58.6L279.6 59.6L276.8 60.6L278.1 63.3L275.4 62.0L274.4 64.8L273.4 62.0L270.7 63.3L272.0 60.6L269.2 59.6L272.0 58.6L270.7 55.9L273.4 57.2Z" fill="#f6a623"/><circle cx="274.4" cy="59.6" r="3.2" fill="#f8b030"/>
<path d="M297.6 58.4L303.2 53.6V72L297.6 76.6Z" fill="#ececec" stroke="#8a8a8a" stroke-width="0.8"/>
<path d="M297.6 58.4L303.2 53.6H308.4L303 58.4Z" fill="#f4f4f4" stroke="#8a8a8a" stroke-width="0.6"/>
<rect x="297.6" y="58.4" width="5.4" height="18.2" fill="#d8d8d8" stroke="#8a8a8a" stroke-width="0.6"/>
<path d="M303 58.4L308.4 53.6H313.4V71.8L308 76.6H303Z" fill="#5aa4e0"/>
<path d="M303 58.4L308.4 53.6H313.4L308 58.4Z" fill="#8cc4f0"/>
<path d="M308 58.4L313.4 53.6V71.8L308 76.6Z" fill="#3d86c6"/>
<path d="M311 64.4H316" stroke="#222" stroke-width="1.1"/><path d="M315.2 62.4L318.4 64.4L315.2 66.4Z" fill="#222"/>
<path d="M328.2 60.2L334 53.6H343Q351.2 55 351.2 64V70.6L345.4 76.6H328.2Z" fill="#d8d8d8" stroke="#8a8a8a" stroke-width="0.8"/>
<path d="M345.4 76.6L351.2 70.6V64L345.4 68.6Z" fill="#b4b4b4"/>
<path d="M328.2 60.2L334 53.6H342L337.4 60.2Z" fill="#ececec"/>
<path d="M337.4 60.2L342 53.6Q351.4 54.6 351.2 64L345.4 68.6Q345.6 60.6 337.4 60.2Z" fill="#5aa4e0"/>
<path d="M359.2 58.6L364.4 53.6H382.2V71.6L377 76.6H359.2Z" fill="#ececec" stroke="#8a8a8a" stroke-width="0.8"/>
<path d="M377 58.6L382.2 53.6V71.6L377 76.6Z" fill="#b4b4b4" stroke="#8a8a8a" stroke-width="0.6"/>
<rect x="359.2" y="58.6" width="17.8" height="18" fill="#d8d8d8" stroke="#8a8a8a" stroke-width="0.8"/>
<rect x="362.4" y="61.8" width="11.4" height="11.6" fill="#fff" stroke="#8a8a8a" stroke-width="0.6"/>
<path d="M362.4 61.8H367V69.4H373.8V73.4H362.4Z" fill="#5aa4e0"/>
<path d="M362.4 61.8H367V69.4L362.4 73.4Z" fill="#3d86c6"/>
<path d="M390.8 63.6L394.8 59.6H400.6V57.2L404.4 53.4H414V66.4L410.6 69.8H405.4V73.4L402 76.8H390.8Z" fill="#5aa4e0"/>
<path d="M400.6 57.2L404.4 53.4H414L410.6 57.2Z" fill="#8cc4f0"/>
<path d="M390.8 63.6L394.8 59.6H400.6V63.6Z" fill="#8cc4f0"/>
<path d="M410.6 57.2L414 53.4V66.4L410.6 69.8ZM402 73L405.4 69.8V73.4L402 76.8Z" fill="#3d86c6"/>
<path d="M423 57.4L427.4 53.4H444.4V61L440 65H423Z" fill="#5aa4e0"/>
<path d="M423 57.4L427.4 53.4H444.4L440 57.4Z" fill="#8cc4f0"/>
<path d="M440 57.4L444.4 53.4V61L440 65Z" fill="#3d86c6"/>
<path d="M423 68.4H440L444.4 64.6V71.8L440 75.8H423Z" fill="#d8d8d8" stroke="#8a8a8a" stroke-width="0.6"/>
<path d="M440 68.4L444.4 64.6V71.8L440 75.8Z" fill="#b4b4b4"/>
<path d="M421.8 66.6H440.6L445.6 62.4" stroke="#4a90cc" stroke-width="1" fill="none"/>
<path d="M464.6 56.8V72.8M456.6 64.8H472.6" stroke="#2a2a2a" stroke-width="1.5"/>
<path d="M464.6 53.8L468.0 58.2L461.2 58.2Z" fill="#2a2a2a"/>
<path d="M464.6 75.8L461.2 71.4L468.0 71.4Z" fill="#2a2a2a"/>
<path d="M453.6 64.8L458.0 61.4L458.0 68.2Z" fill="#2a2a2a"/>
<path d="M475.6 64.8L471.2 68.2L471.2 61.4Z" fill="#2a2a2a"/>
<path d="M493 66L496 63.4H515V73.8L512 76.8H493Z" fill="#ececec" stroke="#8a8a8a" stroke-width="0.7"/>
<rect x="493" y="66" width="9.6" height="10.8" fill="#d8d8d8" stroke="#8a8a8a" stroke-width="0.6"/>
<rect x="502.6" y="66" width="9.4" height="10.8" fill="#d8d8d8" stroke="#8a8a8a" stroke-width="0.6"/>
<path d="M512 66L515 63.4V73.8L512 76.8Z" fill="#b4b4b4"/>
<path d="M493 58.6L496 55.8H505.4V63.4L502.6 66H493Z" fill="#5aa4e0"/>
<path d="M493 58.6L496 55.8H505.4L502.6 58.6Z" fill="#8cc4f0"/>
<path d="M502.6 58.6L505.4 55.8V63.4L502.6 66Z" fill="#3d86c6"/>
<path d="M510.0 53.8L511.0 56.7L513.8 55.4L512.5 58.2L515.4 59.2L512.5 60.2L513.8 63.0L511.0 61.7L510.0 64.6L509.0 61.7L506.2 63.0L507.5 60.2L504.6 59.2L507.5 58.2L506.2 55.4L509.0 56.7Z" fill="#f6a623"/><circle cx="510.0" cy="59.2" r="3.3" fill="#f8b030"/>
<path d="M525.6 60.4L530 55.2L533.4 54.6L534.6 56.4V61L532.2 62.4V70.8L528 75L525.6 73.4Z" fill="#d4d4d4" stroke="#7a7a7a" stroke-width="0.9" stroke-linejoin="round"/>
<path d="M530.2 57.2V72.6" stroke="#9a9a9a" stroke-width="0.8"/>
<path d="M537 62.4L540 60.8V57L541.6 56L545.6 60.6V74.6L543.4 75L537 69.6Z" fill="#c8c8c8" stroke="#7a7a7a" stroke-width="0.9" stroke-linejoin="round"/>
<path d="M541 58.4V72.4" stroke="#9a9a9a" stroke-width="0.8"/>
<path d="M580.2 60.6L586.6 53.4H591.4V68.6L585 75.8H580.2Z" fill="#ececec" stroke="#8a8a8a" stroke-width="0.8"/>
<path d="M580.2 60.6H585V75.8H580.2Z" fill="#d8d8d8" stroke="#8a8a8a" stroke-width="0.6"/>
<path d="M585 60.6L591.8 53.2V68.4L585 75.8Z" fill="#5cc07c"/>
<path d="M595.6 61L602.2 53.6V68L595.6 75.2Z" fill="#f0a060"/>
<rect x="646" y="66.2" width="20.4" height="4.4" fill="#f0b030"/>
<path d="M647.4 66.2V68.2M649.4 66.2V68.2M651.4 66.2V68.2M653.4 66.2V68.2M655.4 66.2V68.2M657.4 66.2V68.2M659.4 66.2V68.2M661.4 66.2V68.2M663.4 66.2V68.2M665.4 66.2V68.2" stroke="#9a6a10" stroke-width="0.6"/>
<path d="M646.6 58.6V65M665.8 58.6V65M647.4 61.9H665" stroke="#444" stroke-width="0.9" fill="none"/>
<path d="M647 61.9L650 60.4V63.4ZM665.4 61.9L662.4 60.4V63.4Z" fill="#444"/>
<rect x="699.2" y="54.4" width="21" height="20.4" fill="#6eb8f0" stroke="#4a8cc8" stroke-width="0.8"/>
<path d="M699.6 66.8L705.6 62.6L711.4 69L715 66.4L719.8 70.4V74.4H699.6Z" fill="#4a8cc6"/>
<circle cx="714.4" cy="59.6" r="2.3" fill="#f6fbff"/>
<rect x="749" y="51" width="27.8" height="27.8" fill="#1890d8"/>
<rect x="751.4" y="53.4" width="20.6" height="15.8" fill="none" stroke="#7cd0f4" stroke-width="1" stroke-dasharray="2.2 1.6"/>
<path d="M766.2 63.8L773.8 71.2L770.4 71.6L772.2 75.6L770.4 76.4L768.6 72.4L766.2 74.6Z" fill="#fff"/>
<path d="M202.4 83.8H206.4L204.4 86.6Z" fill="#333"/>
<path d="M396.0 83.8H400.0L398.0 86.6Z" fill="#333"/>
<path d="M538.4 83.8H542.4L540.4 86.6Z" fill="#333"/>
<path d="M612.4 83.8H616.4L614.4 86.6Z" fill="#333"/>
<path d="M669.6 83.8H673.6L671.6 86.6Z" fill="#333"/>
<path d="M723.0 83.8H727.0L725.0 86.6Z" fill="#333"/>
<path d="M775.4 83.8H779.4L777.4 86.6Z" fill="#333"/>
<path d="M62.6 61.6H66.6L64.6 64.2Z" fill="#333"/>
<rect x="439.6" y="105.4" width="7.4" height="6" rx="0.8" fill="#f0a82c"/><path d="M441.2 105.6V103.8a2.1 2.1 0 0 1 4.2 0V105.6" fill="none" stroke="#e09a20" stroke-width="1.2"/></svg>
</body></html>
